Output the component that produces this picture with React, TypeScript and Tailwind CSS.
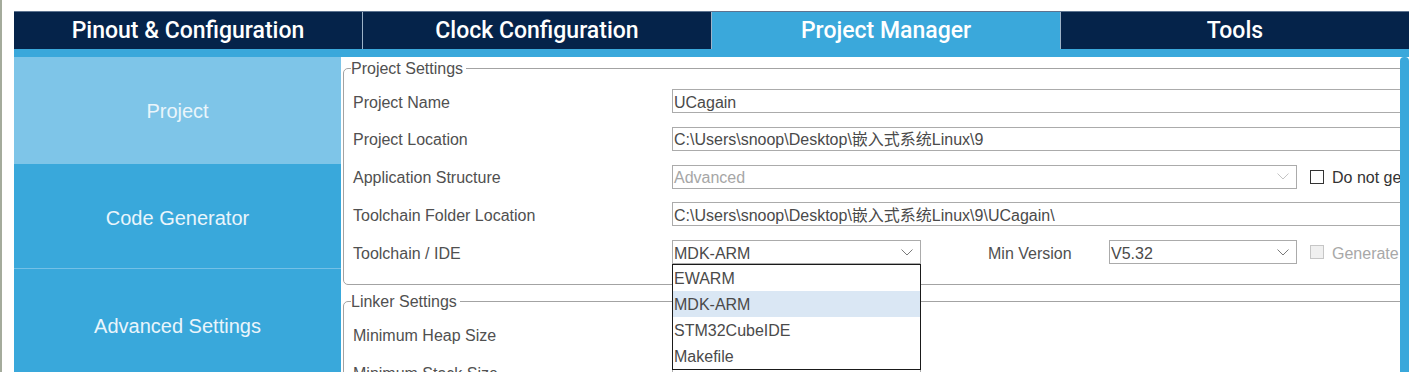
import type { ReactNode } from "react";

/**
 * CubeMX-style Project Manager screen: top tab strip, left category column,
 * Project Settings form with the Toolchain / IDE dropdown opened.
 */

const TABS = [
  { label: "Pinout & Configuration", active: false },
  { label: "Clock Configuration", active: false },
  { label: "Project Manager", active: true },
  { label: "Tools", active: false },
];

const IDE_OPTIONS = ["EWARM", "MDK-ARM", "STM32CubeIDE", "Makefile"];

function Chevron({ disabled = false }: { disabled?: boolean }) {
  return (
    <svg width="12" height="7" viewBox="0 0 12 7" className="shrink-0" aria-hidden>
      <polyline
        points="0.5,0.5 6,6 11.5,0.5"
        fill="none"
        stroke={disabled ? "#c4c4c4" : "#7a7a7a"}
        strokeWidth="1"
      />
    </svg>
  );
}

function Row({ label, children }: { label: string; children?: ReactNode }) {
  return (
    <div className="flex h-[24px] items-center">
      <span className="w-[319px] shrink-0 pt-[3px] text-[16px] text-[#505050]">{label}</span>
      {children}
    </div>
  );
}

function TextField({ value }: { value: string }) {
  return (
    <div className="flex h-[24px] min-w-0 flex-1 items-center border border-[#ababab] bg-white pl-[1px] pt-[3px] text-[16px] whitespace-nowrap text-[#4a4a4a]">
      {value}
    </div>
  );
}

function Select({
  value,
  width,
  disabled = false,
  children,
}: {
  value: string;
  width: string;
  disabled?: boolean;
  children?: ReactNode;
}) {
  return (
    <div className={`relative shrink-0 ${width}`}>
      <div
        className={`flex h-[24px] items-center justify-between border border-[#ababab] bg-white pl-[1px] pr-[7px] text-[16px] ${
          disabled ? "text-[#a6a6a6]" : "text-[#4a4a4a]"
        }`}
      >
        <span className="pt-[3px]">{value}</span>
        <Chevron disabled={disabled} />
      </div>
      {children}
    </div>
  );
}

function CheckBox({ label, disabled = false }: { label: string; disabled?: boolean }) {
  return (
    <div className="ml-[13px] flex shrink-0 items-center gap-[8px] whitespace-nowrap">
      <span
        className={`h-[14px] w-[14px] border ${
          disabled ? "border-[#c6c6c6] bg-[#f0f0f0]" : "border-[#333333] bg-white"
        }`}
      />
      <span className={`pt-[3px] text-[16px] ${disabled ? "text-[#a8a8a8]" : "text-[#333333]"}`}>{label}</span>
    </div>
  );
}

function Group({ title, className, children }: { title: string; className?: string; children: ReactNode }) {
  return (
    <fieldset className={`ml-[2px] w-[1140px] rounded-[5px] border border-[#a3a3a3] pl-[9px] ${className ?? ""}`}>
      <legend className="-ml-[2px] pr-[3px] pt-[1px] text-[16px] leading-[18px] text-[#505050]">{title}</legend>
      {children}
    </fieldset>
  );
}

export default function App() {
  return (
    <div className="flex h-[372px] w-[1419px] overflow-hidden bg-white font-['Liberation_Sans','Noto_Sans_CJK_SC',sans-serif]">
      <div className="w-[2px] shrink-0 bg-[#a4ab9c]" />

      <div className="ml-[12px] flex w-[1395px] shrink-0 flex-col pt-[11px]">
        {/* Top tabs */}
        <div className="flex h-[38px] border-t border-[#5d7390] bg-[#05234a]">
          {TABS.map((t, i) => (
            <div
              key={t.label}
              className={`flex flex-1 items-center justify-center pt-[2px] font-['Roboto',sans-serif] text-[23px] font-medium text-white ${
                i > 0 ? "border-l border-[#9db3c8]" : ""
              } ${t.active ? "bg-[#3aa8db]" : ""}`}
            >
              {t.label}
            </div>
          ))}
        </div>
        <div className="h-[8px] bg-[#3aa8db]" />

        <div className="flex min-h-0 flex-1">
          {/* Category column */}
          <div className="flex w-[327px] shrink-0 flex-col text-[20px] text-[#eaf5fb]">
            <div className="flex h-[107px] shrink-0 items-center justify-center bg-[#7ec5e8]">Project</div>
            <div className="flex h-[104px] shrink-0 items-center justify-center bg-[#39a8db] pt-[4px]">
              Code Generator
            </div>
            <div className="flex h-[115px] shrink-0 items-center justify-center border-t border-[#74c0e6] bg-[#39a8db]">
              Advanced Settings
            </div>
          </div>

          {/* Settings form */}
          <div className="min-w-0 flex-1 overflow-hidden pt-[2px]">
            <Group title="Project Settings" className="pb-[20px]">
              <div className="mt-[11px] flex flex-col gap-[13.75px]">
                <Row label="Project Name">
                  <TextField value="UCagain" />
                </Row>
                <Row label="Project Location">
                  <TextField value="C:\Users\snoop\Desktop\嵌入式系统Linux\9" />
                </Row>
                <Row label="Application Structure">
                  <Select value="Advanced" width="w-[625px]" disabled />
                  <CheckBox label="Do not generate the main()" />
                </Row>
                <Row label="Toolchain Folder Location">
                  <TextField value="C:\Users\snoop\Desktop\嵌入式系统Linux\9\UCagain\" />
                </Row>
                <Row label="Toolchain / IDE">
                  <Select value="MDK-ARM" width="w-[249px] z-10">
                    <div className="absolute left-0 top-[24px] w-[249px] border border-[#1a1a1a] bg-white">
                      {IDE_OPTIONS.map((o) => (
                        <div
                          key={o}
                          className={`flex h-[26px] items-center pl-[1px] pt-[2px] text-[16px] text-[#4a4a4a] ${
                            o === "MDK-ARM" ? "bg-[#dae7f4]" : ""
                          }`}
                        >
                          {o}
                        </div>
                      ))}
                    </div>
                  </Select>
                  <span className="ml-[67px] w-[121px] shrink-0 pt-[3px] text-[16px] text-[#505050]">Min Version</span>
                  <Select value="V5.32" width="w-[188px]" />
                  <CheckBox label="Generate Under Root" disabled />
                </Row>
              </div>
            </Group>

            <Group title="Linker Settings" className="mt-[7px] pb-[20px]">
              <div className="mt-[11px] flex flex-col gap-[14px]">
                <Row label="Minimum Heap Size">
                  <div className="h-[24px] w-[249px] border border-[#ababab]" />
                </Row>
                <Row label="Minimum Stack Size">
                  <div className="h-[24px] w-[249px] border border-[#ababab]" />
                </Row>
              </div>
            </Group>
          </div>

          {/* Scrollbar */}
          <div className="w-[9px] shrink-0 rounded-t-[4px] bg-[#3aa8db]" />
        </div>
      </div>
    </div>
  );
}
